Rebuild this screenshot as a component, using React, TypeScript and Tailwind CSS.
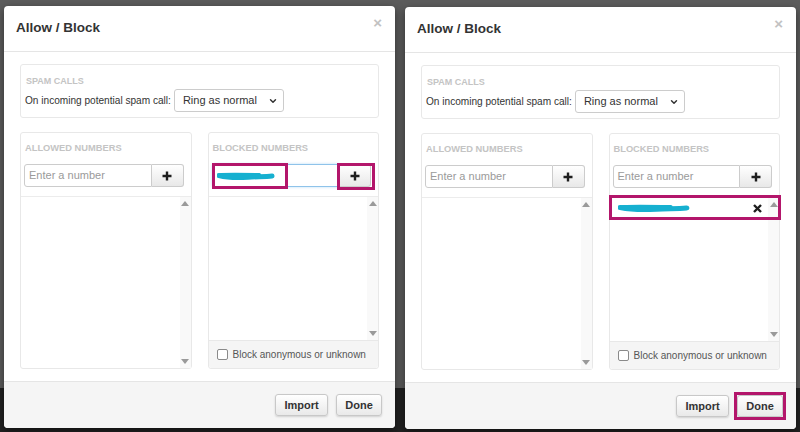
import { ChevronDown } from 'lucide-react';

const FONT = { fontFamily: '"Liberation Sans", Arial, sans-serif' };

// small up/down arrows of the fake scrollbar
function Arrow({ dir }: { dir: 'up' | 'down' }) {
  return dir === 'up' ? (
    <div className="w-0 h-0 border-l-[4px] border-r-[4px] border-b-[5px] border-l-transparent border-r-transparent border-b-[#9a9a9a]" />
  ) : (
    <div className="w-0 h-0 border-l-[4px] border-r-[4px] border-t-[5px] border-l-transparent border-r-transparent border-t-[#9a9a9a]" />
  );
}

function Plus() {
  return (
    <svg width="10" height="10" viewBox="0 0 10 10">
      <path d="M5 0.5V9.5M0.5 5H9.5" stroke="#1e1e1e" strokeWidth="2.4" />
    </svg>
  );
}

function Scribble({ w = 60 }: { w?: number }) {
  return (
    <svg width={w} height="10" viewBox="0 0 60 10" preserveAspectRatio="none">
      <path d="M2 4.5C10 6.5 20 7 32 6.2C42 5.6 50 5.8 57 5" stroke="#16b0d0" strokeWidth="5" strokeLinecap="round" fill="none" />
      <path d="M4 3.5C14 3 28 3.2 44 3.6" stroke="#16b0d0" strokeWidth="3" strokeLinecap="round" fill="none" />
    </svg>
  );
}

function Highlight({ className }: { className: string }) {
  return <span className={`absolute border-[3px] border-[#b3166b] pointer-events-none ${className}`} />;
}

function InputGroup({ filled }: { filled?: boolean }) {
  return (
    <div className="flex h-[23px]">
      <div
        className={`relative flex-1 flex items-center px-[4px] border rounded-l-[3px] text-[11px] ${
          filled ? 'border-[#8fc3ea] shadow-[0_0_3px_#b9dcf5]' : 'border-[#cccccc] text-[#9a9a9a]'
        }`}
      >
        {filled ? <Scribble w={58} /> : 'Enter a number'}
        {filled && <Highlight className="-left-[1px] -top-[2px] w-[76px] h-[26px]" />}
      </div>
      <div className="relative w-[32px] flex items-center justify-center border border-l-0 border-[#cccccc] rounded-r-[3px] bg-[linear-gradient(#ffffff,#e8e8e8)]">
        <Plus />
        {filled && <Highlight className="-left-[2px] -top-[2px] w-[38px] h-[27px]" />}
      </div>
    </div>
  );
}

function ListBox({ title, blocked, filled, added }: { title: string; blocked?: boolean; filled?: boolean; added?: boolean }) {
  return (
    <div className="border border-[#e8e8e8] rounded-[3px] flex flex-col overflow-visible">
      <div className="h-[64px] border-b border-[#ececec] pt-[10px] pl-[3px] pr-[7px]">
        <div className="text-[9.3px] leading-[10px] font-bold text-[#c4c4c4] pl-[1px]">{title}</div>
        <div className="mt-[11px]">
          <InputGroup filled={filled} />
        </div>
      </div>
      <div className="relative flex-1 flex">
        <div className="flex-1">
          {added && (
            <div className="h-[20px] flex items-center justify-between pl-[8px] pr-[6px]">
              <Scribble w={72} />
              <svg width="9" height="9" viewBox="0 0 9 9">
                <path d="M1 1L8 8M8 1L1 8" stroke="#1e1e1e" strokeWidth="2.4" />
              </svg>
            </div>
          )}
        </div>
        <div className="w-[11px] bg-[#f9f9f9] flex flex-col items-center justify-between pt-[4px] pb-[4px]">
          <Arrow dir="up" />
          <Arrow dir="down" />
        </div>
        {added && <Highlight className="-left-[1px] -top-[3px] w-[172px] h-[25px]" />}
      </div>
      {blocked && (
        <div className="h-[28px] border-t border-[#e8e8e8] bg-[#f5f5f5] flex items-center gap-[5px] pl-[8px] rounded-b-[3px]">
          <div className="w-[11px] h-[11px] border border-[#8a8a8a] rounded-[2px] bg-white" />
          <span className="text-[10px] text-[#555]">Block anonymous or unknown</span>
        </div>
      )}
    </div>
  );
}

function Button({ label, width, highlight }: { label: string; width: string; highlight?: boolean }) {
  return (
    <div className={`relative h-[22px] ${width} flex items-center justify-center border border-[#c8c8c8] rounded-[3px] bg-[linear-gradient(#ffffff,#e9e9e9)] shadow-[0_1px_2px_rgba(0,0,0,0.15)] text-[11px] font-bold text-[#333]`}>
      {label}
      {highlight && <Highlight className="-left-[4px] -right-[4px] -top-[4px] -bottom-[4px]" />}
    </div>
  );
}

function Dialog({ step }: { step: 1 | 2 }) {
  return (
    <div className={`w-[391px] h-[422px] bg-white rounded-[4px] shadow-[0_3px_9px_rgba(0,0,0,0.5)] flex flex-col overflow-hidden ${step === 2 ? 'mt-px' : ''}`}>
      <div className="h-[46px] shrink-0 border-b border-[#e5e5e5] flex justify-between pl-[12px] pr-[13px]">
        <div className="self-center text-[13.5px] font-bold text-[#333]">Allow / Block</div>
        <div className="mt-[9px] text-[15px] leading-[15px] font-bold text-[#c2c2c2]">×</div>
      </div>
      <div className="shrink-0 px-[16px] pt-[12px] pb-[12px] flex flex-col gap-[14px]">
        <div className="h-[54px] border border-[#e8e8e8] rounded-[3px] pt-[11px] pl-[4px]">
          <div className="text-[9px] leading-[10px] font-bold text-[#c4c4c4] pl-[1px]">SPAM CALLS</div>
          <div className="mt-[3px] h-[23px] flex items-center gap-[3px]">
            <span className="text-[10.1px] text-[#333]">On incoming potential spam call:</span>
            <div className="w-[110px] h-[23px] border border-[#cccccc] rounded-[3px] flex items-center justify-between pl-[8px] pr-[5px] text-[11px] text-[#333]">
              Ring as normal
              <ChevronDown size={10} strokeWidth={3.5} color="#333" />
            </div>
          </div>
        </div>
        <div className="h-[237px] grid grid-cols-2 gap-[16px]">
          <ListBox title="ALLOWED NUMBERS" />
          <ListBox title="BLOCKED NUMBERS" blocked filled={step === 1} added={step === 2} />
        </div>
      </div>
      <div className="flex-1 border-t border-[#e5e5e5] bg-[#f5f5f5] flex justify-end items-start pt-[12px] pr-[13px] gap-[8px]">
        <Button label="Import" width="w-[53px]" />
        <Button label="Done" width="w-[46px]" highlight={step === 2} />
      </div>
    </div>
  );
}

export default function App() {
  return (
    <div
      className="w-[800px] h-[432px] overflow-hidden flex items-start gap-[10px] pl-[4px] pt-[6px] bg-[linear-gradient(to_bottom,#5c5c5c_0px,#5c5c5c_388px,#222222_388px)]"
      style={FONT}
    >
      <Dialog step={1} />
      <Dialog step={2} />
    </div>
  );
}
